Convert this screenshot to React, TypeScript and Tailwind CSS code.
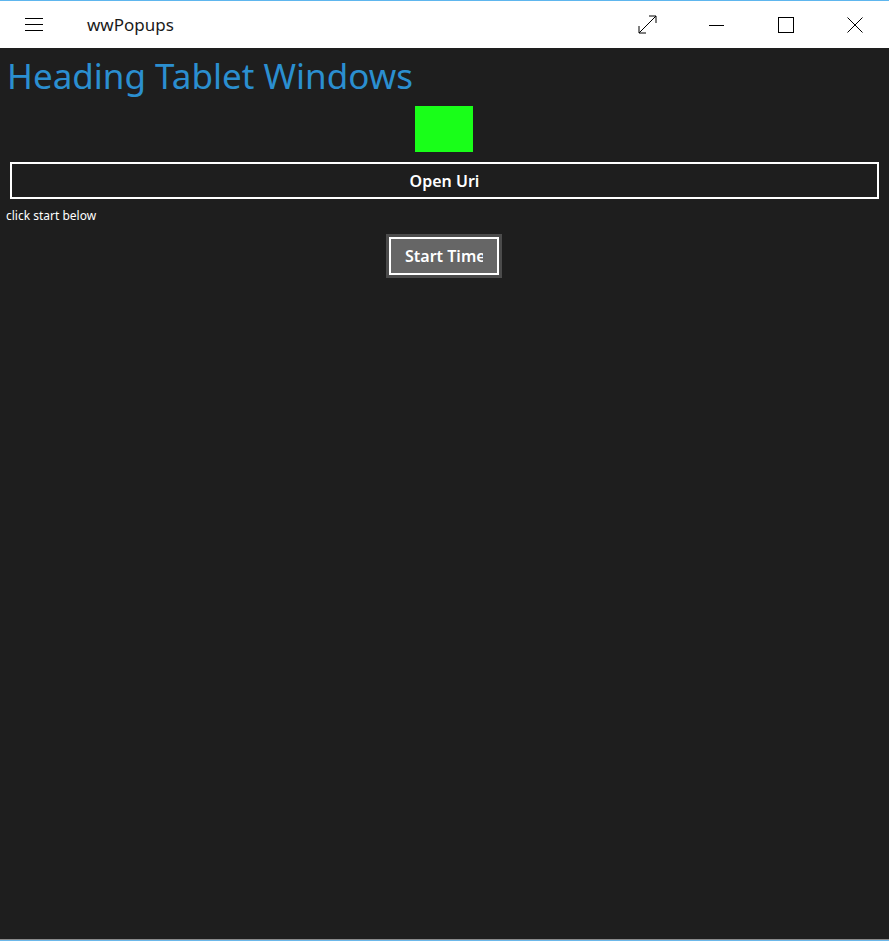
import { useState } from 'react';

const font = { fontFamily: '"Noto Sans", "Open Sans", sans-serif' };

function TitleBar() {
  return (
    <div className="flex h-[47px] items-center bg-white text-black">
      <button className="flex h-[47px] w-[68px] items-center justify-center">
        <svg width="18" height="14" viewBox="0 0 18 14" fill="none" stroke="#000" strokeWidth="1">
          <path d="M0 0.5h18M0 6.5h18M0 12.5h18" />
        </svg>
      </button>
      <span className="ml-[19px] text-[17px] leading-none text-[#1a1a1a]">wwPopups</span>
      <div className="ml-auto flex h-full">
        <button className="flex w-[69px] items-center justify-center">
          <svg width="19" height="19" viewBox="0 0 19 19" fill="none" stroke="#000" strokeWidth="1">
            <path d="M1 18L18 1M11 1h7v7M1 11v7h7" />
          </svg>
        </button>
        <button className="flex w-[69px] items-center justify-center">
          <svg width="16" height="16" viewBox="0 0 16 16" fill="none" stroke="#000" strokeWidth="1">
            <path d="M0 8.5h15" />
          </svg>
        </button>
        <button className="flex w-[69px] items-center justify-center">
          <svg width="16" height="16" viewBox="0 0 16 16" fill="none" stroke="#000" strokeWidth="1">
            <rect x="0.5" y="0.5" width="15" height="15" />
          </svg>
        </button>
        <button className="flex w-[69px] items-center justify-center">
          <svg width="16" height="16" viewBox="0 0 16 16" fill="none" stroke="#000" strokeWidth="1">
            <path d="M0.5 0.5l15 15M15.5 0.5l-15 15" />
          </svg>
        </button>
      </div>
    </div>
  );
}

export default function App() {
  const [started, setStarted] = useState(false);

  return (
    <div className="flex h-[941px] w-[889px] flex-col overflow-hidden" style={font}>
      <div className="h-px bg-[#5eb6ee]" />
      <TitleBar />

      {/* Page content */}
      <div className="flex flex-1 flex-col bg-[#1e1e1e]">
        <h1 className="ml-[7px] mt-[6px] text-[35px] leading-[44px] text-[#2b8fd0]">Heading Tablet Windows</h1>

        <div className="mt-[8px] flex justify-center pr-px">
          <div className="h-[46px] w-[58px] bg-[#19ff19]" />
        </div>

        <button className="mx-[10px] mt-[10px] h-[37px] border-2 border-white text-[16px] font-semibold text-white">
          Open Uri
        </button>

        <p className="ml-[6px] mt-[10px] text-[12px] leading-[14px] text-white">
          {started ? 'running…' : 'click start below'}
        </p>

        <div className="mt-[11px] flex justify-center pr-px">
          <button
            onClick={() => setStarted(!started)}
            className="h-[44px] w-[116px] border-[3px] border-[#4b4b4b] bg-[#4b4b4b]"
          >
            <div className="flex h-full w-full items-center border-2 border-white bg-[#666666] px-[14px] text-[16px] font-semibold text-white">
              <span className="block w-full overflow-hidden whitespace-nowrap text-left">Start Time</span>
            </div>
          </button>
        </div>
      </div>

      <div className="h-px bg-[#8a8a8a]" />
      <div className="h-px bg-[#6cb8ea]" />
    </div>
  );
}
